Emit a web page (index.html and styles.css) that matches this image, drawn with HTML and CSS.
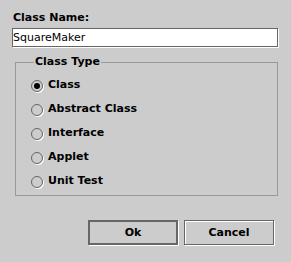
FILE: index.html
```html
<!DOCTYPE html>
<html>
  <head>
    <link rel="stylesheet" href="styles.css">
  </head>
  <body>
    <div class="dialog">
      <div class="name-label">Class Name:</div>
      <input class="name-field" type="text" value="SquareMaker">

      <fieldset class="type-group">
        <legend>Class Type</legend>
        <label class="radio-row"><span class="radio checked"></span>Class</label>
        <label class="radio-row"><span class="radio"></span>Abstract Class</label>
        <label class="radio-row"><span class="radio"></span>Interface</label>
        <label class="radio-row"><span class="radio"></span>Applet</label>
        <label class="radio-row"><span class="radio"></span>Unit Test</label>
      </fieldset>

      <div class="buttons">
        <button class="btn default">Ok</button>
        <button class="btn">Cancel</button>
      </div>
    </div>
  </body>
</html>
```

FILE: styles.css
```css
/* Metal look and feel dialog */
body {
  margin: 0;
  background-color: #cccccc;
  font-family: "DejaVu Sans", sans-serif;
  font-size: 11px;
  color: #000;
}

.dialog {
  width: 291px;
  height: 262px;
  box-sizing: border-box;
  padding: 10px 13px 0 12px;
}

.name-label {
  font-weight: bold;
  line-height: 16px;
  margin: 0 0 2px 1px;
}

.name-field {
  display: block;
  width: 266px;
  height: 19px;
  box-sizing: border-box;
  margin: 0;
  padding: 0;
  border: 1px solid #666666;
  box-shadow: 1px 1px 0 #ffffff;
  background-color: #fff;
  font-family: "DejaVu Sans", sans-serif;
  font-size: 11px;
  line-height: 17px;
  color: #000;
  outline: none;
}

.type-group {
  width: 263px;
  box-sizing: border-box;
  margin: 8px 0 0 3px;
  padding: 4px 0 2px 15px;
  border: 1px solid #999999;
  min-width: 0;
}

.type-group legend {
  margin-left: 3px;
  padding: 0 1px;
  font-weight: bold;
  line-height: 14px;
}

.radio-row {
  display: flex;
  align-items: center;
  height: 24px;
  font-weight: bold;
  line-height: 24px;
}

.radio {
  width: 12px;
  height: 12px;
  box-sizing: border-box;
  margin: 1px 5px 0 0;
  border: 1px solid #666666;
  border-radius: 50%;
  box-shadow: 1px 1px 0 #ffffff;
  display: flex;
  align-items: center;
  justify-content: center;
}

.radio.checked::after {
  content: "";
  width: 6px;
  height: 6px;
  border-radius: 50%;
  background-color: #000;
}

.buttons {
  display: flex;
  justify-content: flex-end;
  gap: 6px;
  margin: 24px 4px 0 0;
}

.btn {
  width: 90px;
  height: 25px;
  box-sizing: border-box;
  margin: 0;
  padding: 0;
  border: 1px solid #666666;
  box-shadow: inset 1px 1px 0 #ffffff, 1px 1px 0 #ffffff;
  background-color: #cccccc;
  font-family: "DejaVu Sans", sans-serif;
  font-size: 11px;
  font-weight: bold;
  line-height: 23px;
  color: #000;
}

.btn.default {
  border-width: 2px;
  line-height: 21px;
  box-shadow: 1px 1px 0 #ffffff;
}
```
